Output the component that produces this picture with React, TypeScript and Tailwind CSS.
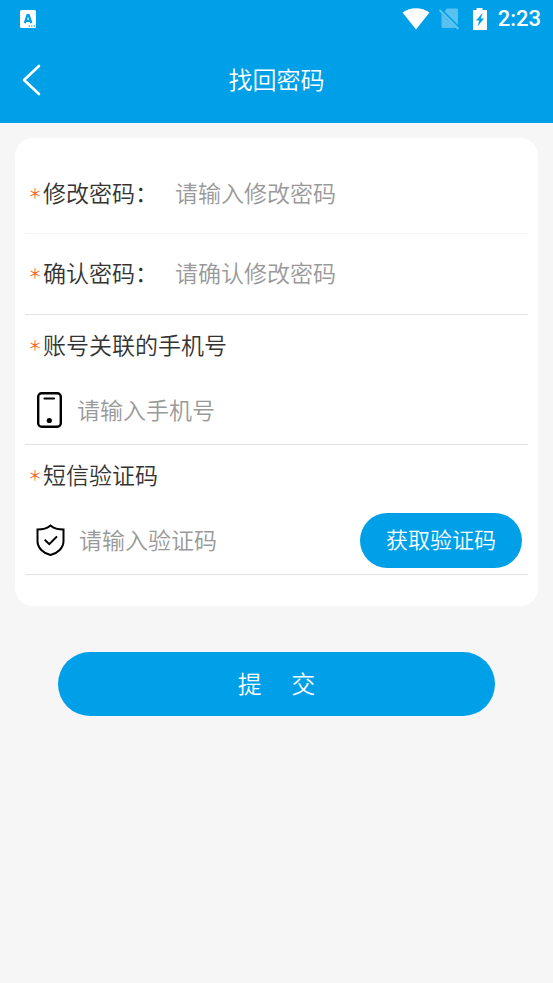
import React, { useState } from 'react';

interface FieldLabelProps {
  htmlFor: string;
  children: React.ReactNode;
}

const FieldLabel = ({ htmlFor, children }: FieldLabelProps) => (
  <label htmlFor={htmlFor} className="flex shrink-0 items-center whitespace-nowrap text-[#333333]">
    <span className="w-[15px] text-[14px] leading-6 font-normal text-[#f95f1b]">＊</span>
    {children}
  </label>
);

const inputClass =
  'min-w-0 flex-1 bg-transparent text-[#333333] outline-none placeholder:text-[#999999] placeholder:opacity-100';

const StatusBar = () => (
  <div className="flex h-[38px] items-center justify-between pr-3 pl-5">
    <svg width="16" height="18" viewBox="0 0 16 18" aria-hidden="true">
      <rect width="16" height="18" rx="1.5" fill="#fff" />
      <path d="M4.8 13.2 7.5 5.2h1.2L11.4 13.2M5.6 10.800h5" fill="none" stroke="#00a0e9" strokeWidth="2.2" />
      <path d="M8.5 16h1.5M11 16h1.5M13.5 16H15" stroke="#00a0e9" strokeWidth="1.2" />
    </svg>
    <div className="flex items-center text-white">
      <svg width="28" height="22" viewBox="0 0 28 22" aria-hidden="true">
        <path d="M.5 4.6C8.2-1.1 19.8-1.1 27.5 4.6L14 21.5Z" fill="#fff" />
      </svg>
      <svg className="ml-2" width="22" height="22" viewBox="0 0 22 22" aria-hidden="true">
        <path d="M9 .5H18.5a1.500 1.500 0 0 1 1.5 1.5V17L6.5 3.5ZM3.5 5.5 18 20H5a1.500 1.500 0 0 1-1.5-1.5Z" fill="#fff" opacity=".35" />
        <path d="M1.5 2 20.5 21" stroke="#fff" strokeWidth="1.8" opacity=".4" />
      </svg>
      <svg className="ml-3" width="16" height="22" viewBox="0 0 16 22" aria-hidden="true">
        <path d="M4.5 0h6v2H15v20H1V2h3.5Z" fill="#fff" />
        <path d="M10.5 5 4 12.500h3.3L5.5 18.500 12 10.500H8.800Z" fill="#00a0e9" />
      </svg>
      <span className="ml-[10px] font-['Roboto'] text-[22px] leading-7 font-medium">2:23</span>
    </div>
  </div>
);

const PhoneIcon = () => (
  <svg className="shrink-0" width="26" height="36" viewBox="0 0 26 36" fill="none" stroke="#000" aria-hidden="true">
    <rect x="1.2" y="1.2" width="22.6" height="33.6" rx="3.5" strokeWidth="2.4" />
    <path d="M7.5 6.500h9.5" strokeWidth="2.2" strokeLinecap="round" />
    <circle cx="12.3" cy="28.5" r="2.6" fill="#000" stroke="none" />
  </svg>
);

const ShieldIcon = () => (
  <svg className="shrink-0" width="29" height="32" viewBox="0 0 29 32" fill="none" stroke="#000" strokeWidth="2" aria-hidden="true">
    <path d="M14.5 1.5C11 4.5 6.5 5.6 1.5 5.6V17c0 7 5.8 12.3 13 14 7.2-1.7 13-7 13-14V5.6c-5 0-9.5-1.1-13-4.1Z" />
    <path d="m8.7 15.8 4.6 4.4 7.7-7.8" />
  </svg>
);

export default function App() {
  const [password, setPassword] = useState('');
  const [confirm, setConfirm] = useState('');
  const [phone, setPhone] = useState('');
  const [code, setCode] = useState('');

  return (
    <div className="min-h-screen bg-[#f6f6f6] font-['Noto_Sans_CJK_SC',sans-serif] text-[23px] leading-8 font-[350]">
      <header className="bg-[#00a0e9] text-white">
        <StatusBar />
        <div className="grid h-[85px] grid-cols-[64px_1fr_64px] items-center pb-[2px]">
          <button type="button" aria-label="返回" className="pl-[22px]">
            <svg width="20" height="32" viewBox="0 0 20 32" fill="none" stroke="#fff" strokeWidth="2.6" strokeLinecap="round" strokeLinejoin="round" aria-hidden="true">
              <path d="M17 2 2 16l15 14" />
            </svg>
          </button>
          <h1 className="pb-[2px] text-center text-[24px]">找回密码</h1>
        </div>
      </header>

      <form onSubmit={(e) => e.preventDefault()}>
        <div className="mx-[15px] mt-[15px] rounded-[18px] bg-white px-[10px] pt-4 pb-[31px]">
          <div className="flex h-20 items-center border-b border-[#f2f2f2] pb-1 pl-[3px]">
            <FieldLabel htmlFor="password">修改密码：</FieldLabel>
            <input
              id="password"
              type="password"
              className={`${inputClass} ml-[17px]`}
              placeholder="请输入修改密码"
              value={password}
              onChange={(e) => setPassword(e.target.value)}
            />
          </div>

          <div className="flex h-[81px] items-center border-b border-[#e2e2e2] pb-1 pl-[3px]">
            <FieldLabel htmlFor="confirm">确认密码：</FieldLabel>
            <input
              id="confirm"
              type="password"
              className={`${inputClass} ml-[17px]`}
              placeholder="请确认修改密码"
              value={confirm}
              onChange={(e) => setConfirm(e.target.value)}
            />
          </div>

          <div className="border-b border-[#e2e2e2] pt-[13px] pl-[3px]">
            <FieldLabel htmlFor="phone">账号关联的手机号</FieldLabel>
            <div className="mt-4 flex h-[68px] items-center pl-[9px]">
              <PhoneIcon />
              <input
                id="phone"
                type="tel"
                className={`${inputClass} ml-[14px] pb-[2px]`}
                placeholder="请输入手机号"
                value={phone}
                onChange={(e) => setPhone(e.target.value)}
              />
            </div>
          </div>

          <div className="border-b border-[#e2e2e2] pt-[13px] pl-[3px]">
            <FieldLabel htmlFor="code">短信验证码</FieldLabel>
            <div className="mt-4 flex h-[68px] items-center pr-[6px] pl-[8px]">
              <ShieldIcon />
              <input
                id="code"
                type="text"
                className={`${inputClass} ml-[14px] pb-[2px]`}
                placeholder="请输入验证码"
                value={code}
                onChange={(e) => setCode(e.target.value)}
              />
              <button
                type="button"
                className="h-[55px] w-[162px] shrink-0 rounded-full bg-[#00a0e9] pb-1 text-[22px] text-white"
              >
                获取验证码
              </button>
            </div>
          </div>
        </div>

        <div className="px-[58px] pt-[46px]">
          <button type="submit" className="h-16 w-full rounded-full bg-[#00a0e9] pb-[2px] text-[24px] text-white">
            提{'\u3000\u00a0'}交
          </button>
        </div>
      </form>
    </div>
  );
}
